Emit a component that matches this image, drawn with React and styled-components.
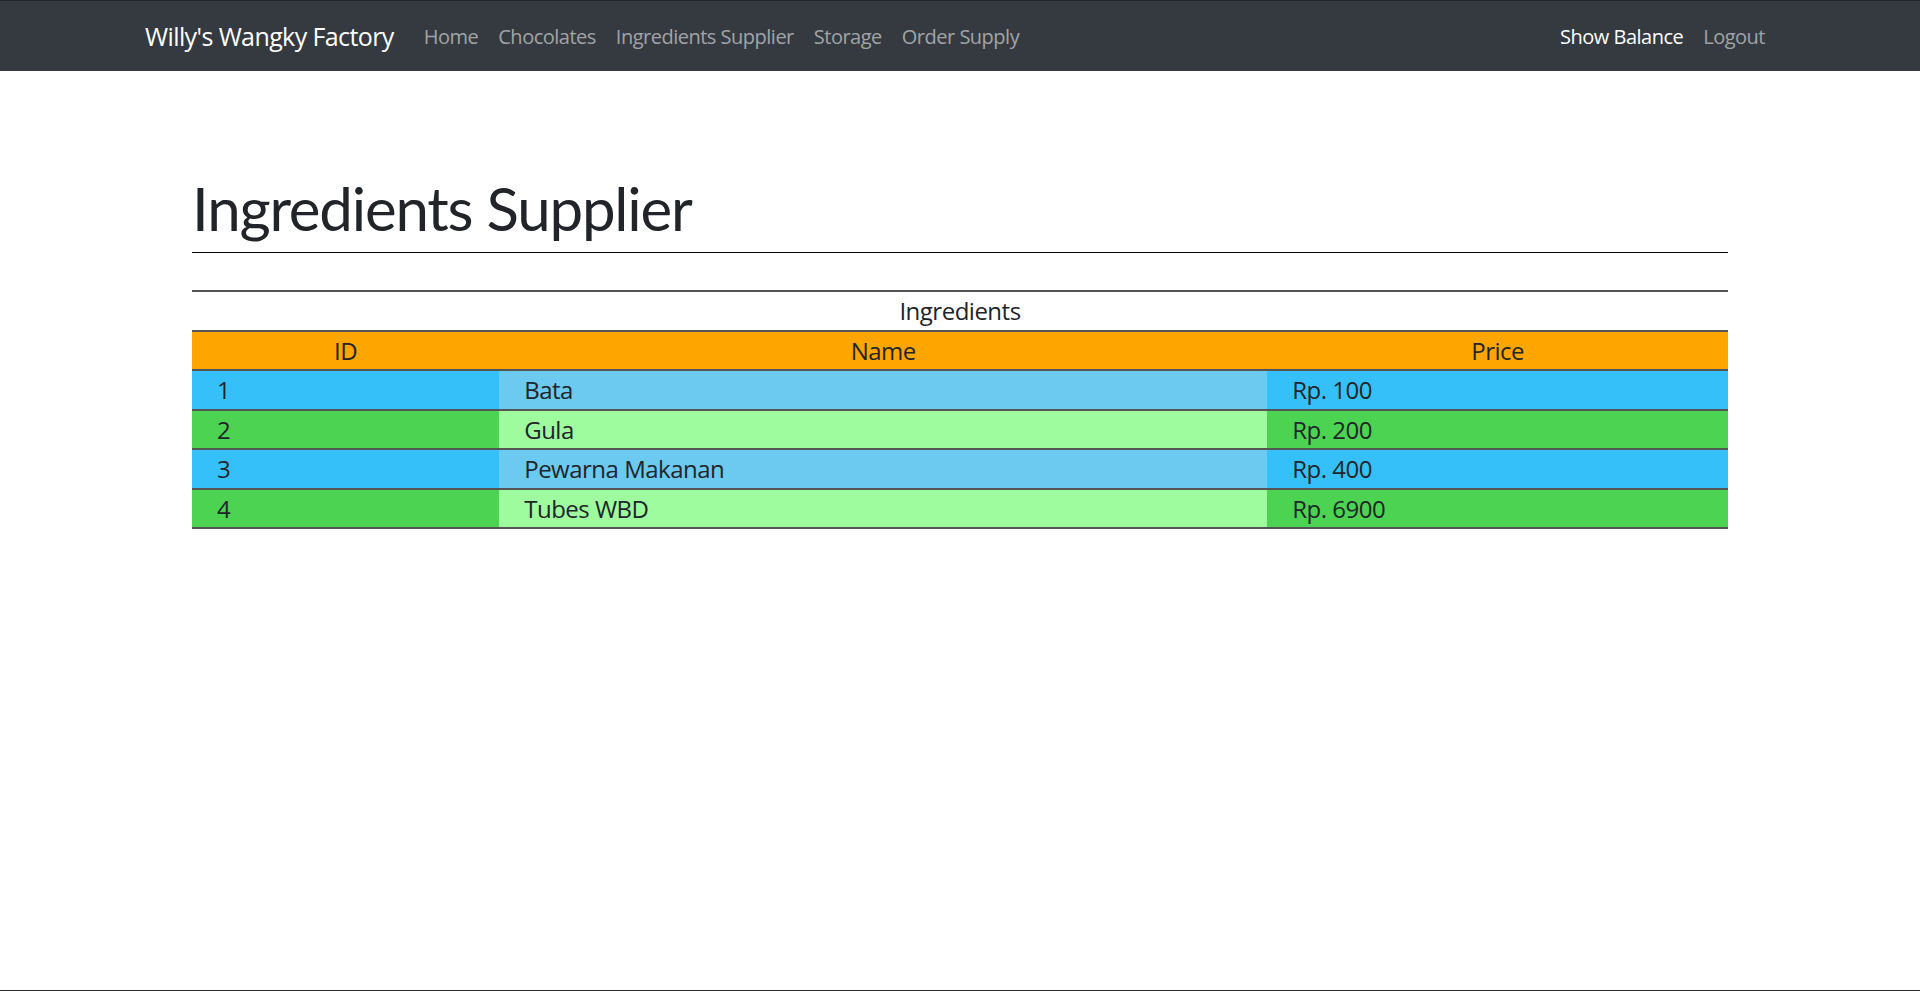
import React from 'react';
import styled, { createGlobalStyle } from 'styled-components';

const GlobalStyle = createGlobalStyle`
  html, body {
    margin: 0;
    padding: 0;
    background: #ffffff;
  }
  body {
    font-family: "Open Sans", "Noto Sans", sans-serif;
    color: #212529;
  }
  * {
    box-sizing: border-box;
  }
`;

const ingredients = [
  { id: 1, name: 'Bata', price: 100 },
  { id: 2, name: 'Gula', price: 200 },
  { id: 3, name: 'Pewarna Makanan', price: 400 },
  { id: 4, name: 'Tubes WBD', price: 6900 },
];

const App = () => {
  return (
    <Page>
      <GlobalStyle />
      <NavBar>
        <NavLeft>
          <Brand href="#">Willy's Wangky Factory</Brand>
          <NavLink href="#">Home</NavLink>
          <NavLink href="#">Chocolates</NavLink>
          <NavLink href="#">Ingredients Supplier</NavLink>
          <NavLink href="#">Storage</NavLink>
          <NavLink href="#">Order Supply</NavLink>
        </NavLeft>
        <NavRight>
          <NavLink href="#" active>
            Show Balance
          </NavLink>
          <NavLink href="#">Logout</NavLink>
        </NavRight>
      </NavBar>

      <Main>
        <Title>Ingredients Supplier</Title>
        <Table>
          <colgroup>
            <col style={{ width: '20%' }} />
            <col style={{ width: '50%' }} />
            <col style={{ width: '30%' }} />
          </colgroup>
          <thead>
            <Row>
              <CaptionCell colSpan={3}>Ingredients</CaptionCell>
            </Row>
            <HeadRow>
              <HeadCell>ID</HeadCell>
              <HeadCell>Name</HeadCell>
              <HeadCell>Price</HeadCell>
            </HeadRow>
          </thead>
          <tbody>
            {ingredients.map((item, i) => (
              <Row key={item.id}>
                <Cell tone={i % 2 === 0 ? 'blue' : 'green'}>{item.id}</Cell>
                <Cell tone={i % 2 === 0 ? 'lightBlue' : 'lightGreen'}>{item.name}</Cell>
                <Cell tone={i % 2 === 0 ? 'blue' : 'green'}>Rp. {item.price}</Cell>
              </Row>
            ))}
          </tbody>
        </Table>
      </Main>
    </Page>
  );
};

const tones = {
  blue: '#36c0fa',
  lightBlue: '#6cc9f0',
  green: '#4cd352',
  lightGreen: '#9efc9e',
};

const Page = styled.div`
  min-height: 100vh;
  display: flex;
  flex-direction: column;
  border-bottom: 1px solid #2b2b2b;
`;

const NavBar = styled.nav`
  height: 71px;
  padding: 2px 145px 0 145px;
  display: flex;
  align-items: center;
  justify-content: space-between;
  background-color: #343a40;
  border-top: 1px solid #23272b;
`;

const NavLeft = styled.div`
  display: flex;
  align-items: center;
`;

const NavRight = styled.div`
  display: flex;
  align-items: center;
`;

const Brand = styled.a`
  margin-right: 20px;
  font-size: 25px;
  line-height: 1.5;
  color: #ffffff;
  text-decoration: none;
  letter-spacing: -0.6px;
`;

const NavLink = styled.a`
  padding: 0 10px;
  font-size: 20px;
  line-height: 1.5;
  color: ${(p) => (p.active ? '#ffffff' : 'rgba(255, 255, 255, 0.55)')};
  text-decoration: none;
  letter-spacing: -0.5px;
`;

const Main = styled.main`
  width: 80%;
  margin: 0 auto;
  padding-top: 101px;
`;

const Title = styled.h1`
  margin: 0 0 37px 0;
  padding-bottom: 8px;
  font-family: Lato, "Open Sans", sans-serif;
  font-size: 60px;
  font-weight: 400;
  line-height: 72px;
  letter-spacing: -1.2px;
  color: #212529;
  border-bottom: 1px solid #000000;
`;

const Table = styled.table`
  width: 100%;
  border-collapse: collapse;
  table-layout: fixed;
  font-size: 24px;
  line-height: 37.5px;
  letter-spacing: -0.5px;
  color: #212529;
  border-bottom: 2px solid #555555;
`;

const Row = styled.tr`
  border-top: 2px solid #555555;
`;

const HeadRow = styled(Row)`
  background-color: #ffa500;
`;

const CaptionCell = styled.th`
  padding: 0;
  font-weight: 400;
  text-align: center;
`;

const HeadCell = styled.th`
  padding: 0;
  font-weight: 400;
  text-align: center;
`;

const Cell = styled.td`
  padding: 0 0 0 25px;
  text-align: left;
  background-color: ${(p) => tones[p.tone]};
`;

export default App;
